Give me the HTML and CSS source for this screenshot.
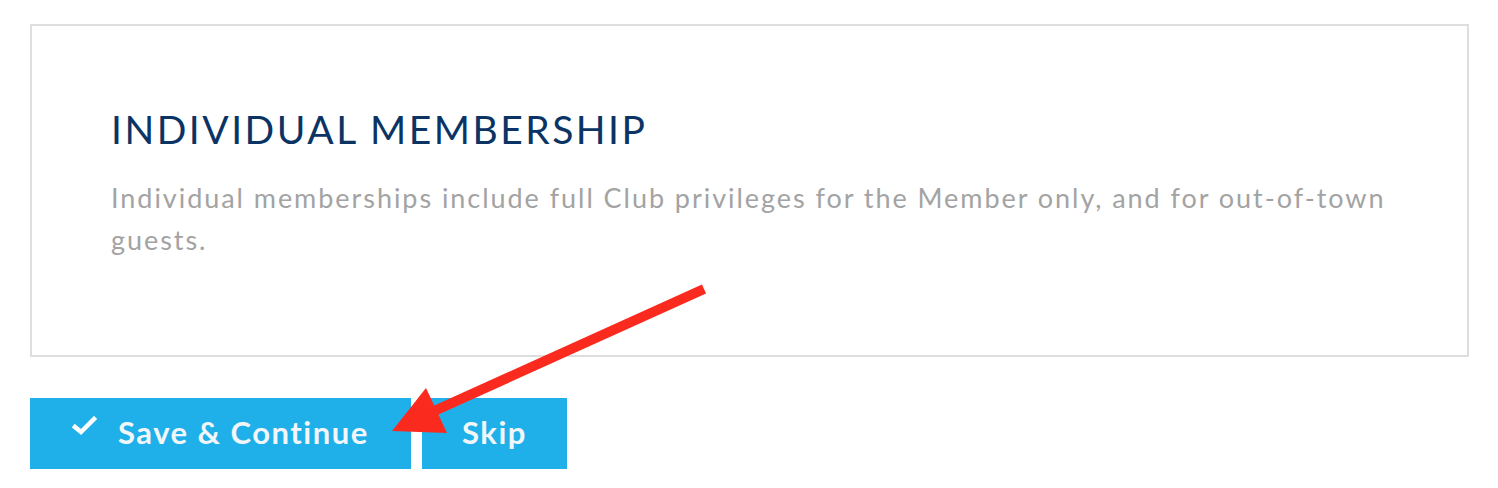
FILE: index.html
```html
<!DOCTYPE html>
<html lang="en">
<head>
    <meta charset="UTF-8">
    <title>Membership</title>
    <link rel="stylesheet" href="styles.css">
</head>
<body>
    <div class="page">
        <div class="plan-card">
            <h2 class="plan-title">INDIVIDUAL MEMBERSHIP</h2>
            <p class="plan-desc">Individual memberships include full Club privileges for the Member only, and for out&#8209;of&#8209;town guests.</p>
        </div>

        <div class="actions">
            <button class="btn btn-save">
                <svg class="check" width="26" height="20" viewBox="0 0 26 20">
                    <path d="M3 11 L9 16 L22 3" fill="none" stroke="#fff" stroke-width="4.5" stroke-linecap="square"/>
                </svg>
                Save &amp; Continue
            </button>
            <button class="btn btn-skip">Skip</button>
        </div>
    </div>

    <!-- annotation arrow drawn over the page -->
    <svg class="arrow" width="1498" height="488" viewBox="0 0 1498 488">
        <line x1="704" y1="289" x2="432" y2="412" stroke="#fb2a1f" stroke-width="10"/>
        <polygon points="392,431 426,388 447,433" fill="#fb2a1f"/>
    </svg>
</body>
</html>
```

FILE: styles.css
```css
body {
    margin: 0;
    font-family: Lato, "Liberation Sans", sans-serif;
    background: #fff;
}
.page {
    padding: 24px 29px 0 30px;
}
.plan-card {
    height: 333px;
    box-sizing: border-box;
    border: 2px solid #dedede;
    padding: 80px 60px 0 79px;
}
.plan-title {
    margin: 0;
    font-size: 39px;
    font-weight: 400;
    letter-spacing: 2.5px;
    color: #0b3465;
    line-height: 46px;
}
.plan-desc {
    margin: 25px 0 0;
    font-size: 27px;
    line-height: 42px;
    letter-spacing: 1.95px;
    color: #a3a3a3;
}
.actions {
    display: flex;
    gap: 11px;
    margin-top: 41px;
}
.btn {
    height: 71px;
    border: none;
    background: #1fb0ea;
    color: #f2f6f8;
    font-family: inherit;
    font-size: 31px;
    font-weight: 700;
    letter-spacing: 1.5px;
    display: flex;
    align-items: center;
    padding: 0 0 3px;
}
.btn-save {
    width: 381px;
    padding-left: 42px;
    gap: 20px;
}
.btn-skip {
    width: 145px;
    justify-content: center;
}
.check {
    margin-top: -12px;
}
.arrow {
    position: absolute;
    top: 0;
    left: 0;
    pointer-events: none;
}
```
